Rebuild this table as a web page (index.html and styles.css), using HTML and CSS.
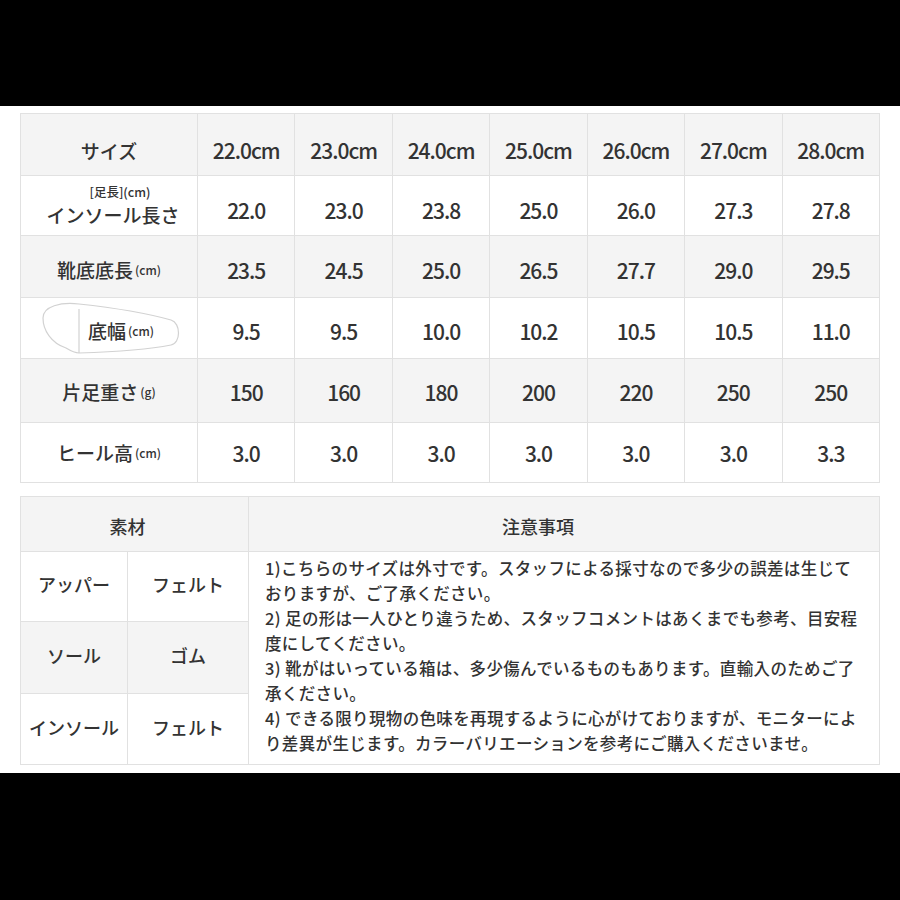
FILE: index.html
```html
<!DOCTYPE html>
<html lang="ja">
<head>
<meta charset="utf-8">
<link rel="stylesheet" href="styles.css">
</head>
<body>
<main class="panel">
  <table class="size">
    <colgroup>
      <col class="c-label">
      <col><col><col><col><col><col><col>
    </colgroup>
    <tr class="gray row1">
      <th class="label">サイズ</th>
      <td>22.0cm</td><td>23.0cm</td><td>24.0cm</td><td>25.0cm</td><td>26.0cm</td><td>27.0cm</td><td>28.0cm</td>
    </tr>
    <tr class="row2">
      <th class="label two"><span class="sub">[足長](cm)</span><span class="main">インソール長さ</span></th>
      <td>22.0</td><td>23.0</td><td>23.8</td><td>25.0</td><td>26.0</td><td>27.3</td><td>27.8</td>
    </tr>
    <tr class="gray row3">
      <th class="label">靴底底長<span class="unit">(cm)</span></th>
      <td>23.5</td><td>24.5</td><td>25.0</td><td>26.5</td><td>27.7</td><td>29.0</td><td>29.5</td>
    </tr>
    <tr class="row4">
      <th class="label foot">
        <svg class="sole" width="177" height="61" viewBox="0 0 177 61" aria-hidden="true">
          <path d="M58 6 C40 4 22 8 22 20 C22 32 30 45 45 50 C50 53 55 55 58 55 C90 54 125 52 150 47 C160 45 160 25 150 22 C125 15 95 10 58 6 Z" fill="none" stroke="#d2d2d2" stroke-width="1.2"/>
          <path d="M58 11 L58 55" stroke="#d2d2d2" stroke-width="1.2"/>
        </svg>
        <span class="foot-text">底幅<span class="unit">(cm)</span></span>
      </th>
      <td>9.5</td><td>9.5</td><td>10.0</td><td>10.2</td><td>10.5</td><td>10.5</td><td>11.0</td>
    </tr>
    <tr class="gray row5">
      <th class="label">片足重さ<span class="unit">(g)</span></th>
      <td>150</td><td>160</td><td>180</td><td>200</td><td>220</td><td>250</td><td>250</td>
    </tr>
    <tr class="row6">
      <th class="label">ヒール高<span class="unit">(cm)</span></th>
      <td>3.0</td><td>3.0</td><td>3.0</td><td>3.0</td><td>3.0</td><td>3.0</td><td>3.3</td>
    </tr>
  </table>

  <table class="info">
    <colgroup>
      <col class="c-a"><col class="c-b"><col>
    </colgroup>
    <tr class="gray head">
      <th colspan="2" class="h-mat">素材</th>
      <th class="h-note">注意事項</th>
    </tr>
    <tr class="r1">
      <td>アッパー</td><td>フェルト</td>
      <td rowspan="3" class="notes">1)こちらのサイズは外寸です。スタッフによる採寸なので多少の誤差は生じて<br>おりますが、ご了承ください。<br>2) 足の形は一人ひとり違うため、スタッフコメントはあくまでも参考、目安程<br>度にしてください。<br>3) 靴がはいっている箱は、多少傷んでいるものもあります。直輸入のためご了<br>承ください。<br>4) できる限り現物の色味を再現するように心がけておりますが、モニターによ<br>り差異が生じます。カラーバリエーションを参考にご購入くださいませ。</td>
    </tr>
    <tr class="gray r2">
      <td>ソール</td><td>ゴム</td>
    </tr>
    <tr class="r3">
      <td>インソール</td><td>フェルト</td>
    </tr>
  </table>
</main>
</body>
</html>
```

FILE: styles.css
```css
html, body {
  margin: 0;
  padding: 0;
  background: #000;
}
body {
  font-family: "Noto Sans CJK JP", "Noto Sans", sans-serif;
  color: #333;
}
.panel {
  margin-top: 106px;
  height: 667px;
  background: #fff;
  padding: 7px 20px 0 20px;
  box-sizing: border-box;
  display: flex;
  flex-direction: column;
  gap: 13px;
}
table {
  border-collapse: collapse;
  table-layout: fixed;
  width: 860px;
}
th, td {
  border: 1px solid #e1e1e1;
  padding: 0;
  text-align: center;
  vertical-align: middle;
  font-weight: 500;
}
.gray th, .gray td {
  background: #f4f4f4;
}
.size .c-label { width: 177px; }
.size .row1 { height: 62px; }
.size .row2 { height: 60px; }
.size .row3 { height: 62px; }
.size .row4 { height: 61px; }
.size .row5 { height: 64px; }
.size .row6 { height: 60px; }
.size .row1 td, .size .row1 th { padding-top: 11px; }
.size .row2 td { padding-top: 8px; }
.size .row3 td, .size .row3 th { padding-top: 6px; }
.size .row4 td { padding-top: 5px; }
.size .row5 td, .size .row5 th { padding-top: 2px; }
.size .row6 td, .size .row6 th { padding-top: 0; }
.size td {
  font-size: 21px;
  letter-spacing: -1px;
  color: #333;
}
.size .label {
  font-size: 19px;
  letter-spacing: 0;
}
.unit {
  font-size: 12px;
  vertical-align: 3px;
  margin-left: 2px;
}
.two .sub {
  display: block;
  font-size: 12.5px;
  line-height: 18px;
  padding-left: 22px;
}
.two .main {
  display: block;
  font-size: 19px;
  line-height: 28px;
  padding-left: 8px;
}
.foot {
  position: relative;
}
.sole {
  position: absolute;
  left: 0;
  top: 0;
}
.foot-text {
  position: relative;
  margin-left: 24px;
  top: 2px;
}
.info .c-a { width: 107px; }
.info .c-b { width: 121px; }
.info .head { height: 55px; }
.info .head th { font-size: 18px; padding-top: 4px; }
.info .h-mat { padding-right: 14px; }
.info .h-note { padding-right: 52px; }
.info .r1 { height: 70px; }
.info .r2 { height: 72px; }
.info .r3 { height: 71px; }
.info td {
  font-size: 18px;
}
.info .r1 td, .info .r2 td, .info .r3 td { padding-bottom: 5px; }
.info .notes {
  background: #fff;
  text-align: left;
  font-size: 16.5px;
  line-height: 25px;
  padding: 0 0 4px 16px;
  white-space: nowrap;
  letter-spacing: 0.35px;
}
```
